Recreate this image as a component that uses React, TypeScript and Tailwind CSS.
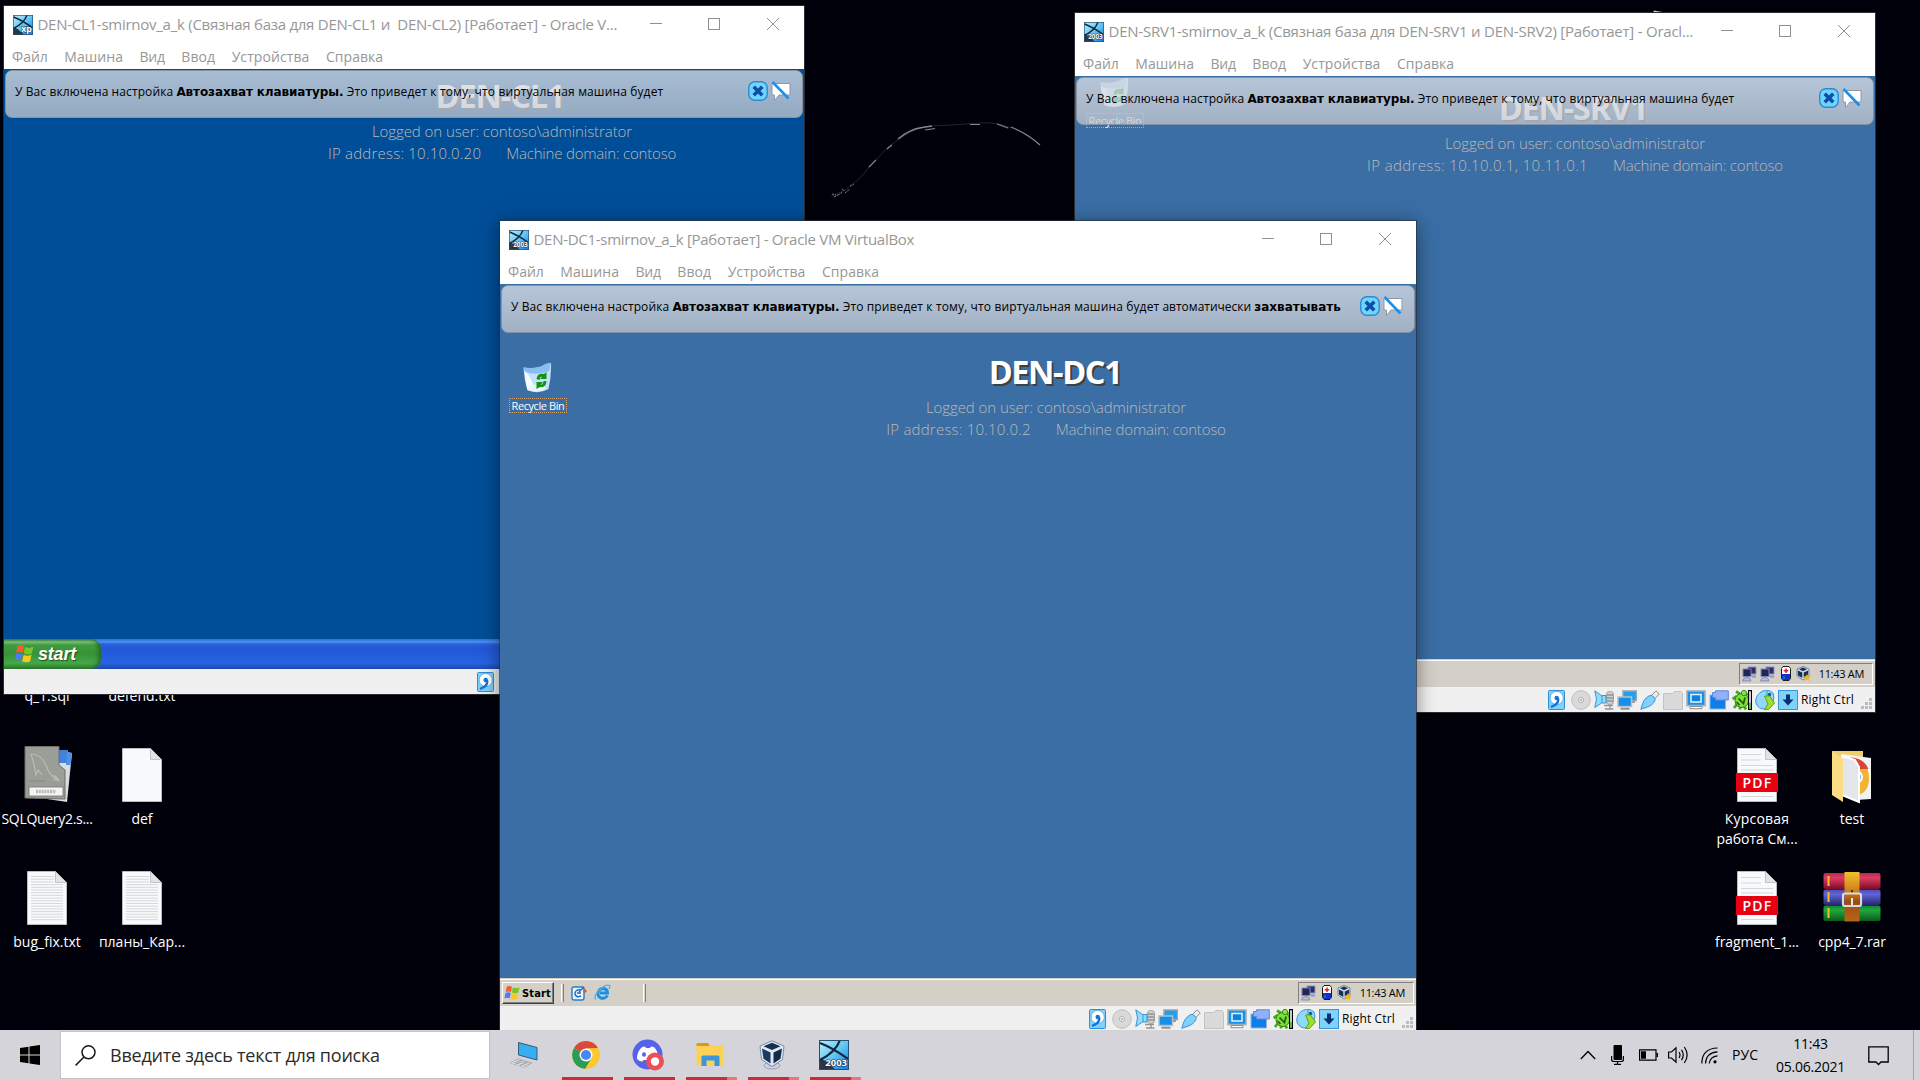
import React from "react";

type Kids = { children?: React.ReactNode };

/* ---------- Windows-style VM logo ---------- */
function OsLogo({ size, label, id }: { size: number; label: string; id: string }) {
  return (
    <svg width={size} height={size} viewBox="0 0 30 30" className="shrink-0">
      <defs>
        <linearGradient id={id} x1="0" y1="0" x2="1" y2="1">
          <stop offset="0" stopColor="#bdf0fb" />
          <stop offset=".5" stopColor="#62c6f2" />
          <stop offset="1" stopColor="#0a78e8" />
        </linearGradient>
      </defs>
      <rect width="30" height="30" fill={`url(#${id})`} />
      <path d="M0 18 L7 21 L17 30 H0Z" fill="#2b3546" />
      <path d="M1 3 Q14 8 29 19 M21 0 Q17 12 1 20" stroke="#14273f" strokeWidth="2.2" fill="none" />
      <rect x=".5" y=".5" width="29" height="29" fill="none" stroke="#27506f" />
      <text x="28" y="26" textAnchor="end" fontFamily="Open Sans" fontWeight="700" fontSize={label === "xp" ? 13 : 9.5} fill="#fff" stroke="#1b2a44" strokeWidth="1.2" paintOrder="stroke">{label}</text>
    </svg>
  );
}

/* ---------- Window chrome ---------- */
function Caption() {
  return (
    <div className="flex h-[36px] shrink-0 pr-px">
      <div className="flex w-[58px] items-center justify-center"><svg width="12" height="12" viewBox="0 0 12 12"><path d="M0 5.5H12" stroke="#8f8f8f" /></svg></div>
      <div className="flex w-[58px] items-center justify-center"><svg width="12" height="12" viewBox="0 0 12 12"><rect x=".5" y=".5" width="11" height="11" fill="none" stroke="#8f8f8f" /></svg></div>
      <div className="flex w-[60px] items-center justify-center"><svg width="12" height="12" viewBox="0 0 12 12"><path d="M0 0L12 12M12 0L0 12" stroke="#8f8f8f" /></svg></div>
    </div>
  );
}

function MenuBar() {
  return (
    <div className="flex h-[25px] items-center gap-[16.5px] pl-[8px] text-[14px] leading-none text-[#979797]">
      <span>Файл</span>
      <span className="tracking-[0.04px]">Машина</span>
      <span className="tracking-[-0.2px]">Вид</span>
      <span className="tracking-[0.05px]">Ввод</span>
      <span className="tracking-[0.09px]">Устройства</span>
      <span className="tracking-[0.04px]">Справка</span>
    </div>
  );
}

function Banner({ long }: { long?: boolean }) {
  return (
    <div className="absolute top-px right-px left-px flex h-[48px] rounded-[7px] border border-[#8393a4] bg-linear-to-b from-[rgba(221,225,231,0.76)] to-[rgba(194,198,206,0.76)] pr-[11px] pl-[9px]">
      <div className="flex-1 pt-[12px] text-[12px] leading-[18px] whitespace-pre text-black">
        <span className="tracking-[0.1px]">У Вас включена настройка </span>
        <span className="font-['DejaVu_Sans',sans-serif] font-bold tracking-[-0.12px]">Автозахват клавиатуры.</span>
        <span className="tracking-[0.13px]"> Это приведет к тому, что виртуальная машина будет</span>
        {long && <span> автоматически </span>}
        {long && <span className="font-['DejaVu_Sans',sans-serif] font-bold">захватывать</span>}
      </div>
      <div className="flex gap-[3px] pt-[10px]">
        <svg width="20" height="20" viewBox="0 0 20 20">
          <rect x=".8" y=".8" width="18.4" height="18.4" rx="6" fill="#71d4fb" stroke="#2a8bd4" strokeWidth="1.4" />
          <path d="M7 7l6 6M13 7l-6 6" stroke="#0b4fa8" strokeWidth="3.6" strokeLinecap="square" />
        </svg>
        <svg width="20" height="20" viewBox="0 0 20 20">
          <path d="M1 2.5H19V14H8L3.5 19.500V14H1Z" fill="#fff" stroke="#8d99a8" />
          <path d="M1.500 1L17.500 17.500" stroke="#1e8fe8" strokeWidth="2.600" />
        </svg>
      </div>
    </div>
  );
}

/* ---------- VirtualBox status bar icons ---------- */
function StatusBar() {
  return (
    <div className="flex h-[25px] shrink-0 items-center justify-end gap-[3px] bg-[#f0f0f0] pr-[2px] text-[12px] text-black">
      <svg width="20" height="20" viewBox="0 0 20 20">
        <rect x=".5" y=".5" width="16" height="19" rx="1" fill="#7fd0f8" stroke="#2f8ed8" />
        <circle cx="8.700" cy="8" r="6.600" fill="#fff" stroke="#4ea6e6" strokeWidth=".8" />
        <circle cx="8.700" cy="8" r="2.200" fill="#1573d6" />
        <path d="M10 8C11 13 8 15 3 17" stroke="#1573d6" strokeWidth="2.400" fill="none" />
      </svg>
      <svg width="20" height="20" viewBox="0 0 20 20">
        <circle cx="10" cy="10" r="9.300" fill="#d9d9d9" stroke="#bdbdbd" />
        <circle cx="10" cy="10" r="2.600" fill="#ededed" stroke="#b5b5b5" />
        <circle cx="10" cy="10" r=".9" fill="#a5a5a5" />
      </svg>
      <svg width="20" height="20" viewBox="0 0 20 20">
        <rect x="12.500" y="1.500" width="7" height="13" rx="3" fill="#cfcfcf" stroke="#9f9f9f" />
        <path d="M13 5h6M13 8h6M13 11h6M10 15.500h9M11 19h8.500M16 15v4" stroke="#949494" strokeWidth="1.300" />
        <path d="M.8 .8L7.500 5.500H12V13H7.500L.8 17.500L2.500 9Z" fill="#8fdcfb" stroke="#3b93d6" />
        <path d="M8 5.500V13" stroke="#3b93d6" />
      </svg>
      <svg width="20" height="20" viewBox="0 0 20 20">
        <rect x="6" y="1" width="13.500" height="9.500" fill="#1fa0f0" stroke="#9aa3ab" strokeWidth="1.500" />
        <path d="M14 12h4" stroke="#9a9a9a" strokeWidth="2" />
        <rect x="1" y="7" width="13.500" height="9.500" fill="#1590ea" stroke="#b9bec4" strokeWidth="1.500" />
        <path d="M3.500 18.700h9" stroke="#8f8f8f" strokeWidth="2" />
      </svg>
      <svg width="20" height="20" viewBox="0 0 20 20">
        <path d="M11.500 5.500L16 .8L19.300 4L15 8.500Z" fill="#ececec" stroke="#8d8d8d" />
        <path d="M.8 19.300L3 12.500C5 8 10 4.500 12 5.500L15 8.500C16 11 12 15.500 7.500 17Z" fill="#7fd0fb" stroke="#3a93d8" />
      </svg>
      <svg width="20" height="20" viewBox="0 0 20 20">
        <path d="M.5 19.500V3.500H9.500L12 1.500H18L19.500 3.500V19.500Z" fill="#dadada" stroke="#c2c2c2" />
      </svg>
      <svg width="20" height="20" viewBox="0 0 20 20">
        <rect x="1" y="1" width="18" height="14.500" fill="#1a8fe8" stroke="#a3b0ba" strokeWidth="1.600" />
        <rect x="5" y="4.500" width="10" height="7.500" fill="#0f82e0" stroke="#d4f1ff" strokeWidth="1.600" />
        <path d="M4 16.500H16V18.700H4Z" fill="#fff" stroke="#8d8d8d" />
      </svg>
      <svg width="20" height="20" viewBox="0 0 20 20">
        <rect x="1" y="5" width="15.500" height="14" fill="#0f7fe8" stroke="#8bb6da" />
        <path d="M3.500 2.500H6.500V.8H19.300V10H6.500V7.500H3.500Z" fill="#8fb0fb" stroke="#6286d8" />
      </svg>
      <svg width="20" height="20" viewBox="0 0 20 20">
        <path d="M4 1.500L8 4M.5 9L5 6M2 18L5 14M8 19.500L8 16M14 19.500L12 16M16 4L13 5" stroke="#4aa81e" strokeWidth="2.800" />
        <ellipse cx="9.800" cy="10.500" rx="6.800" ry="7" fill="#7be03c" stroke="#2f7d12" />
        <circle cx="12" cy="3" r="2.600" fill="#8be84a" stroke="#3a8a18" />
        <path d="M6.500 8.500L11.500 13.500L13 7.500M4.500 12L7.500 15" stroke="#1f5d0a" strokeWidth="1.700" fill="none" />
        <rect x="16.600" y=".6" width="2.800" height="18.800" fill="#fff" stroke="#000" strokeWidth="1.200" />
        <path d="M18 13v6" stroke="#30c020" strokeWidth="1.600" />
      </svg>
      <svg width="20" height="20" viewBox="0 0 20 20">
        <path d="M8 1C3 3 0 8 1 13C3 19 9 20 13 18C18 15 20 8 18 3C15 0 11 0 8 1Z" fill="#8fdafa" stroke="#3c92cf" />
        <path d="M12 1V7" stroke="#3c92cf" />
        <circle cx="14.500" cy="4.500" r="1.700" fill="#10569c" />
        <path d="M9.500 6H14.500L19.500 13L13.500 19.500H9.500L13 14Z" fill="#9ae02c" stroke="#5da314" />
      </svg>
      <svg width="20" height="20" viewBox="0 0 20 20">
        <rect x=".5" y=".5" width="19" height="19" fill="#7fd3fb" stroke="#3a95d8" />
        <path d="M8 4.500H12V9.500H15.500L10 15.500L4.500 9.500H8Z" fill="#062f74" />
      </svg>
      <span className="w-[53px] tracking-[0.15px] whitespace-nowrap">Right Ctrl</span>
      <svg width="16" height="20" viewBox="0 0 16 20" fill="#bcbcbc">
        <path d="M12 8h3v3h-3zM8 12h3v3H8zM12 12h3v3h-3zM4 16h3v3H4zM8 16h3v3H8zM12 16h3v3h-3z" />
      </svg>
    </div>
  );
}

/* ---------- Guest desktop parts ---------- */
function Info({ name, ip, ipCls, pos, nameCls }: { name: string; ip: string; ipCls: string; pos: string; nameCls: string }) {
  return (
    <div className={"absolute flex w-[480px] flex-col items-center text-[15px] leading-[22px] font-light whitespace-pre text-[#bcb9b4] " + pos}>
      <div className={"relative top-px mb-[5px] text-[32.5px] leading-[40px] font-bold text-white [text-shadow:2px_2px_0_#404040] " + nameCls}>{name}</div>
      <div className="tracking-[-0.07px]">{"Logged on user: contoso\\administrator"}</div>
      <div className="flex gap-[25px]">
        <span className={ipCls}>{ip}</span>
        <span className="tracking-[-0.19px]">Machine domain: contoso</span>
      </div>
    </div>
  );
}

function RecycleBin({ pos }: { pos: string }) {
  return (
    <div className={"absolute flex w-[58px] flex-col items-center " + pos}>
      <svg width="32" height="32" viewBox="0 0 32 32" className="mr-[3px]">
        <path d="M2.500 5.500Q16 8 30 .8Q30.500 14 27.500 27Q17 33 6.500 28Q3.500 20 2.500 5.500Z" fill="#c3e2fa" />
        <path d="M2.500 5.500Q18 7 23 2.500Q27 .5 30 .8L28 9Q16 14 4 10Z" fill="#8cbdf0" />
        <path d="M3.500 9Q11 14 13 28Q9 29.500 6.500 28Q4.500 20 3.500 9Z" fill="#f2faff" />
        <ellipse cx="16" cy="26" rx="8.500" ry="3.500" fill="#e9f6ff" />
        <path d="M15.500 17Q16.500 10.500 23 12L25.500 10V17H19L21 15Q19 14 18.500 18ZM25.500 19Q25 26 19 25L15.500 27V20H22L19.500 23Q22 23 22.500 19Z" fill="#119411" />
      </svg>
      <div className="mt-[4px] flex h-[15px] w-full items-center justify-center border border-dotted border-[#d9a066] text-[11px] leading-none tracking-[-0.41px] whitespace-nowrap text-white">Recycle Bin</div>
    </div>
  );
}

function Flag({ size }: { size: number }) {
  return (
    <svg width={size} height={size} viewBox="0 0 18 18" className="shrink-0">
      <path d="M3 2Q6 0 9 2L7.800 8Q5 6.500 2 8Z" fill="#f0602c" />
      <path d="M10 2.500Q13 4.500 17.500 2.500L16 8.500Q13 10.500 8.800 8.500Z" fill="#7cc623" />
      <path d="M1.800 9Q5 7.500 7.600 9L6.400 15Q3.500 13.500 .5 15Z" fill="#4a7df0" />
      <path d="M8.600 9.600Q12 11.500 15.800 9.600L14.500 15.500Q11 17.500 7.300 15.500Z" fill="#f8c820" />
    </svg>
  );
}

function NetIcon() {
  return (
    <svg width="15" height="16" viewBox="0 0 15 16">
      <rect x="6" y="1" width="8" height="7" fill="#2c2f66" stroke="#8e92c8" />
      <rect x="1" y="3" width="8" height="7.500" fill="#23264f" stroke="#7f83bc" />
      <path d="M.5 15Q1 11.500 5 11.500Q9 11.500 9 15Z" fill="#b9bcd8" stroke="#8589b8" />
      <path d="M10 10.500h4" stroke="#9a9cc0" strokeWidth="2.500" />
    </svg>
  );
}

function CubeIcon({ size }: { size: number }) {
  return (
    <svg width={size} height={size} viewBox="0 0 28 30">
      <ellipse cx="14" cy="25.500" rx="8" ry="3.500" fill="none" stroke="#8f9fbe" />
      <ellipse cx="14" cy="24.500" rx="5" ry="2.500" fill="#b5c0d6" />
      <path d="M14 .8L26 6L24.500 19.500L14 26.500L3.500 19.500L2 6Z" fill="#dfe7f2" stroke="#7d8da8" />
      <path d="M14 2.800L22.500 6.300L14 10L5.500 6.300Z" fill="#16304f" />
      <path d="M4 8.500L12.500 12.500V23.500L5.500 18.800Z" fill="#1b3a63" />
      <path d="M24 8.500L15.500 12.500V23.500L22.500 18.800Z" fill="#12294a" />
    </svg>
  );
}

function ClassicTray({ nets }: { nets: number }) {
  return (
    <div className="flex h-[22px] items-center border border-t-[#808080] border-r-white border-b-white border-l-[#808080] pr-[8px] pl-[2px]">
      <div className="flex gap-[3px]">{Array.from({ length: nets }, (_, i) => <NetIcon key={i} />)}</div>
      <svg width="10" height="15" viewBox="0 0 10 15" className="ml-[6px]">
        <path d="M2 .5H8L9.500 2.500V12.500L8 14.500H2L.5 12.500V2.500Z" fill="#fff" stroke="#1c1c1c" />
        <path d="M1 8H9V12.500L8 14H2L1 12.500Z" fill="#1130d8" />
        <path d="M5 2.500V7M2.800 4.700H7.200" stroke="#e02020" strokeWidth="1.500" />
        <path d="M3 10v3" stroke="#21b040" />
      </svg>
      <svg width="15" height="15" viewBox="0 0 15 15" className="ml-[5px]">
        <path d="M7 .5L13 3V10L7 14L1 10V3Z" fill="#d5deea" stroke="#7085a5" />
        <path d="M7 1.500L11 3.300L7 5.200L3 3.300Z" fill="#16304f" />
        <path d="M1.800 4.500L6.300 6.600V12L2 9.500ZM12.200 4.500L7.700 6.600V12L12 9.500Z" fill="#16304f" />
        <path d="M11 8l1.200 2.300 2.600.3-1.900 1.800.5 2.600-2.400-1.300-2.400 1.300.5-2.600-1.900-1.800 2.600-.3z" fill="#f7b21a" />
      </svg>
      <span className="ml-[8px] text-[11px] leading-none tracking-[-0.3px] whitespace-nowrap text-black">11:43 AM</span>
    </div>
  );
}

function Grip() {
  return <div className="h-[18px] w-[3px] border-r border-l border-r-[#808080] border-l-white bg-[#d4d0c8]" />;
}

function ClassicTaskbar({ nets }: { nets: number }) {
  return (
    <div className="flex h-[28px] shrink-0 items-center border-t border-[#d4d0c8] bg-[#d4d0c8] pr-[2px] pl-[2px] shadow-[inset_0_1px_0_#fff]">
      <div className="flex h-[22px] w-[52px] items-center border border-t-white border-r-[#404040] border-b-[#404040] border-l-white pl-[1px] shadow-[inset_-1px_-1px_0_#808080]">
        <Flag size={16} />
        <span className="mt-px ml-[2px] font-['DejaVu_Sans_Condensed',sans-serif] text-[11px] leading-none font-bold tracking-[0.15px] text-black">Start</span>
      </div>
      <div className="ml-[7px]"><Grip /></div>
      <svg width="17" height="16" viewBox="0 0 17 16" className="ml-[7px]">
        <rect x="1" y="2" width="12" height="13" rx="2" fill="#e9f4ff" stroke="#2c7bc8" strokeWidth="1.400" />
        <path d="M10 5Q4 4 4 9Q5 13 10 11M6 8H10M8 7L13 2" stroke="#2370c0" strokeWidth="1.500" fill="none" />
        <circle cx="14" cy="6" r="1.700" fill="#e05a1a" />
      </svg>
      <svg width="17" height="17" viewBox="0 0 17 17" className="ml-[6px]">
        <path d="M13.500 11.500Q11 15 7.500 14.200Q3.500 13 4 9Q5 4.500 9 4.500Q13.500 5 13.500 9H6" stroke="#1f8fe0" strokeWidth="3" fill="none" />
        <path d="M2 15.500Q-1 13 5 6.500Q12 0 15.500 1.500Q16.500 2.500 15 5" stroke="#49b0ee" strokeWidth="1.300" fill="none" />
      </svg>
      <div className="ml-[32px]"><Grip /></div>
      <div className="flex-1" />
      <ClassicTray nets={nets} />
    </div>
  );
}

function LunaTaskbar() {
  return (
    <div className="flex h-[30px] shrink-0 bg-[linear-gradient(180deg,#2f6fd8_0px,#4a93f0_3px,#2a62dc_5px,#2257d6_9px,#2663e2_24px,#1d49b0_30px)]">
      <div className="flex h-full w-[97px] items-center rounded-r-[10px] bg-[linear-gradient(180deg,#2f7d33_0px,#7cc07c_3px,#3f9a40_6px,#379238_15px,#46a846_24px,#2b7a2c_30px)] pl-[10px] shadow-[inset_-4px_0_5px_-2px_#1d5f20]">
        <Flag size={20} />
        <span className="ml-[4px] font-['Liberation_Sans',sans-serif] text-[18px] leading-none font-bold tracking-[-0.2px] text-white italic [text-shadow:1px_1px_1px_#1d4d1d]">start</span>
      </div>
    </div>
  );
}

function VmWindow({ pos, title, titleCls, label, bg, long, children, bar }: { pos: string; title: string; titleCls: string; label: string; bg: string; long?: boolean; bar: React.ReactNode } & Kids) {
  return (
    <section className={"absolute flex flex-col overflow-hidden bg-white " + pos}>
      <header className="flex h-[38px] shrink-0">
        <div className="flex h-[37px] min-w-0 flex-1 items-center pl-[9px]">
          <OsLogo size={20} label={label} id={"logo" + title.slice(4, 8)} />
          <h1 className={"-mt-px ml-[4.5px] text-[15px] leading-none whitespace-pre text-[#979797] " + titleCls}>{title}</h1>
        </div>
        <Caption />
      </header>
      <MenuBar />
      <div className={"relative flex-1 overflow-hidden " + bg}>
        {children}
        <Banner long={long} />
      </div>
      {bar}
      <StatusBar />
    </section>
  );
}

/* ---------- Host desktop icons ---------- */
function Desk({ pos, label, children }: { pos: string; label: React.ReactNode } & Kids) {
  return (
    <div className={"absolute flex w-[96px] flex-col items-center text-center text-[14px] leading-[20px] whitespace-nowrap text-white " + pos}>
      <div className="mb-[4px] h-[60px] w-[60px]">{children}</div>
      {label}
    </div>
  );
}

function Page({ kind }: { kind: "blank" | "text" | "pdf" }) {
  return (
    <svg width="60" height="60" viewBox="0 0 60 60">
      <path d="M10.500 3.500H38.500L49.500 14.500V56.500H10.500Z" fill="#f8f9fb" stroke="#b9bcc0" />
      <path d="M38.500 3.500V14.500H49.500Z" fill="#e2e3e6" stroke="#b5b7ba" strokeWidth=".8" />
      {kind === "text" && Array.from({ length: 17 }, (_, i) => (
        <path key={i} d={`M14 ${8.500 + i * 2.700}H${i < 3 ? 37 : 46}`} stroke="#d5d7da" strokeWidth="1" />
      ))}
      {kind === "pdf" && (
        <g>
          <path d="M14 9.500H34M14 15H34M14 20.500H46M14 25H46M14 51.500H46" stroke="#d5d7da" />
          <rect x="9" y="28" width="42" height="19" fill="#e60012" />
          <text x="30.500" y="42.500" textAnchor="middle" fontFamily="Open Sans" fontWeight="600" fontSize="14" letterSpacing="1.200" fill="#fff">PDF</text>
        </g>
      )}
    </svg>
  );
}

function SqlFile() {
  return (
    <svg width="60" height="60" viewBox="0 0 60 60">
      <path d="M40 5L55 8L50 57L30 54Z" fill="#d9dde0" />
      <path d="M42 5H51V18H42Z" fill="#3f83dd" /><path d="M50 7L55 8L53.500 20H49Z" fill="#4f8fe4" />
      <path d="M8 1.500H42V20L48 25V54L8 53Z" fill="#9b9d97" stroke="#6d6f6a" />
      <path d="M14 9Q24 9 29 20Q32 31 42 35L37 30M42 36L36 34M14 9Q17 18 19 30L21 25L25 30" stroke="#bbbdb8" strokeWidth="1.100" fill="none" />
      <path d="M13 36H28" stroke="#85877f" />
      <rect x="12" y="42" width="34" height="9" fill="#f4f4f2" stroke="#777" strokeWidth=".8" />
      <path d="M19 46.500H39" stroke="#bbb" strokeWidth="3.500" strokeDasharray="2 .8" />
    </svg>
  );
}

function FolderTest() {
  return (
    <svg width="60" height="60" viewBox="0 0 60 60">
      <path d="M10 6H41V16H12Z" fill="#f3cf6b" />
      <path d="M20 9L49 13V54L34 55L20 50Z" fill="#f1f2f3" />
      <path d="M26 13Q47 14 47 33Q47 48 34 51Z" fill="#f2b233" />
      <path d="M28 12.500Q42 13 46.500 24H32Z" fill="#d8443c" />
      <circle cx="34" cy="32" r="6" fill="#7fb8ea" stroke="#fff" strokeWidth="2" />
      <path d="M20 11L33 15L37 22V57L20 50Z" fill="#e3e7ea" stroke="#fff" strokeWidth="2" />
      <path d="M10 6L21 14V57L10 50Z" fill="#fbdc84" />
    </svg>
  );
}

function RarFile() {
  return (
    <svg width="60" height="60" viewBox="0 0 60 60">
      <defs>
        <linearGradient id="rr" x1="0" x2="0" y1="0" y2="1"><stop offset="0" stopColor="#b8284c" /><stop offset=".3" stopColor="#dc3c62" /><stop offset="1" stopColor="#7d0d28" /></linearGradient>
        <linearGradient id="rb" x1="0" x2="0" y1="0" y2="1"><stop offset="0" stopColor="#4a4cb4" /><stop offset=".3" stopColor="#6264d8" /><stop offset="1" stopColor="#26286f" /></linearGradient>
        <linearGradient id="rg" x1="0" x2="0" y1="0" y2="1"><stop offset="0" stopColor="#12852c" /><stop offset=".3" stopColor="#1fa83c" /><stop offset="1" stopColor="#0c5a1c" /></linearGradient>
        <linearGradient id="rs" x1="0" x2="0" y1="0" y2="1"><stop offset="0" stopColor="#f3c02a" /><stop offset=".45" stopColor="#c4741a" /><stop offset=".6" stopColor="#9c4c10" /><stop offset="1" stopColor="#b8651a" /></linearGradient>
      </defs>
      <rect x="1.500" y="5" width="57" height="16" rx="2" fill="url(#rr)" />
      <rect x="1.500" y="21.500" width="57" height="15.500" rx="2" fill="url(#rb)" />
      <rect x="1.500" y="37.500" width="57" height="15.500" rx="2" fill="url(#rg)" />
      <path d="M6.500 8V18M6.500 24V34M6.500 40V50" stroke="#f1bf2c" strokeWidth="2" />
      <rect x="22.500" y="4" width="15" height="49.500" fill="url(#rs)" />
      <path d="M30 22v2.500" stroke="#5a2c06" strokeWidth="2" />
      <rect x="21" y="25.500" width="18" height="12.500" rx="2" fill="none" stroke="#d8dade" strokeWidth="2.200" />
      <path d="M30 30V37" stroke="#e8e8e8" strokeWidth="2" />
    </svg>
  );
}

/* ---------- Host taskbar ---------- */
function TaskIcon({ split, plain, children }: { split?: boolean; plain?: boolean } & Kids) {
  return (
    <div className="flex h-full w-[62px] flex-col items-center">
      <div className="flex flex-1 items-center justify-center pt-[3px] pr-[2px]">{children}</div>
      <div className="flex h-[3px] w-[51px]">
        {!plain && <div className="flex-1 bg-[#cf2b33]" />}
        {split && <div className="w-[10px] bg-[#e2797e]" />}
      </div>
    </div>
  );
}

function Taskbar() {
  return (
    <footer className="absolute inset-x-0 bottom-0 flex h-[50px] bg-[#d5d4da] text-black">
      <div className="flex w-[60px] items-center justify-center">
        <svg width="20" height="20" viewBox="0 0 20 20"><path d="M0 3L8.500 1.800V9.500H0ZM9.500 1.600L20 0V9.500H9.500ZM0 10.500H8.500V18.200L0 17ZM9.500 10.500H20V20L9.500 18.400Z" /></svg>
      </div>
      <div className="my-px flex w-[430px] items-center border border-[#c4c4c8] bg-white pl-[14px]">
        <svg width="21" height="21" viewBox="0 0 21 21" fill="none" stroke="#1a1a1a" strokeWidth="1.500"><circle cx="13.500" cy="7.300" r="6.500" /><path d="M9 12L.6 20.400" /></svg>
        <span className="ml-[14px] text-[18px] leading-none tracking-[-0.22px] text-[#2b2b2b]">Введите здесь текст для поиска</span>
      </div>
      <div className="flex pl-[4px]">
        <TaskIcon plain>
          <svg width="28" height="28" viewBox="0 0 28 28">
            <path d="M8.500 1.500L27 6.500V19L8.500 14Z" fill="#38aef2" stroke="#3a5a70" />
            <path d="M0 22L8 17.500L22 22L15 26.500Z" fill="#e4e6ea" stroke="#9da3a9" strokeWidth=".6" />
            <path d="M3 21L17 25M5 19.700L19 23.600M7 18.500L21 22.500M5 23.500L12 19M10 25L17 20.500" stroke="#8d9499" strokeWidth=".7" />
          </svg>
        </TaskIcon>
        <TaskIcon>
          <svg width="28" height="28" viewBox="0 0 28 28">
            <circle cx="14" cy="14" r="13.800" fill="#fdc72e" />
            <path d="M14 14L2 7.100A13.800 13.800 0 0 1 26 7.100L14 7.500Z" fill="#d94a3d" />
            <path d="M2 7.100A13.800 13.800 0 0 0 13.300 27.800L19.600 17L14 14Z" fill="#2a9c56" />
            <path d="M14 7.500H26A13.800 13.800 0 0 1 13.300 27.800L19.800 17Z" fill="#fdc72e" />
            <circle cx="14" cy="14" r="6.500" fill="#fff" /><circle cx="14" cy="14" r="5.100" fill="#4688f1" />
          </svg>
        </TaskIcon>
        <TaskIcon>
          <svg width="32" height="32" viewBox="0 0 32 32">
            <circle cx="15.500" cy="15.500" r="15" fill="#5562ea" />
            <path d="M9.500 8.500Q11 7.500 13 7.500L14 9H18L19 7.500Q21 7.500 22.500 8.500Q27 14 26.500 20Q24 22.500 21 22.500L20 21H11.500L10.500 22.500Q7.500 22.500 5 20Q5 13 9.500 8.500Z" fill="#fff" />
            <ellipse cx="12" cy="15.500" rx="2" ry="2.200" fill="#5562ea" />
            <circle cx="23" cy="22.500" r="9" fill="#ec4f55" /><circle cx="23" cy="22.500" r="4.200" fill="#fff" />
          </svg>
        </TaskIcon>
        <TaskIcon split>
          <svg width="28" height="28" viewBox="0 0 28 28">
            <path d="M.5 3Q.5 2 1.500 2H12L14 5H.5Z" fill="#d99a12" />
            <path d="M.5 5H13L14.500 4H26.500Q27.500 4 27.500 5V24Q27.500 25 26.500 25H.5Z" fill="#fdd155" />
            <path d="M5.500 25V16Q5.500 14.500 7 14.500H22Q23.500 14.500 23.500 16V25H18.500V19.500H10.500V25Z" fill="#3a95dc" />
          </svg>
        </TaskIcon>
        <TaskIcon split><CubeIcon size={30} /></TaskIcon>
        <TaskIcon split><OsLogo size={30} label="2003" id="logoTask" /></TaskIcon>
      </div>
      <div className="flex-1" />
      <div className="flex items-center pr-[6px]">
        <svg width="16" height="10" viewBox="0 0 16 10" className="shrink-0"><path d="M.8 9L8 1.500L15.200 9" stroke="#000" strokeWidth="1.300" fill="none" /></svg>
        <svg width="13" height="20" viewBox="0 0 13 20" className="ml-[15px] shrink-0"><rect x="2.500" width="8.500" height="15" rx="1" /><path d="M.6 11V14.500Q.6 16.500 3 16.500H10Q12.400 16.500 12.400 14.500V11M6.500 16.500V19M3 19.300H10" stroke="#000" strokeWidth="1.200" fill="none" /></svg>
        <svg width="19" height="12" viewBox="0 0 19 12" className="ml-[15px] shrink-0"><path d="M.6 .8H17V11.200H.6Z" stroke="#000" strokeWidth="1.200" fill="none" /><path d="M2 2.300H7V9.700H2ZM17.500 4H19V8H17.500Z" /></svg>
        <svg width="21" height="18" viewBox="0 0 21 18" className="ml-[10px] shrink-0" fill="none" stroke="#000" strokeWidth="1.200"><path d="M.6 6H3.500L8 1.800V16.200L3.500 12H.6ZM11 6Q13 9 11 12M13.500 3.800Q17 9 13.500 14.200M16.300 1Q22 9 16.300 17" /></svg>
        <svg width="17" height="17" viewBox="0 0 17 17" className="ml-[12px] shrink-0" fill="none" stroke="#000" strokeWidth="1.200"><path d="M.8 16.500Q1 1.500 16.500 1M4.500 16.500Q5 5.500 16.500 4.800M8.300 16.500Q9 9.500 16.500 8.800" /><circle cx="14" cy="14.800" r="1.600" fill="#000" stroke="none" /></svg>
        <span className="ml-[14px] text-[14px] leading-none">РУС</span>
        <div className="ml-[18px] flex flex-col items-center text-[14px] leading-[23px] tracking-[-0.24px]"><span>11:43</span><span>05.06.2021</span></div>
        <svg width="21" height="20" viewBox="0 0 21 20" className="mt-[2px] ml-[23px] shrink-0" fill="none" stroke="#000" strokeWidth="1.300"><path d="M.8 .8H20.200V16H13L10.500 18.500L8 16H.8Z" /></svg>
        <div className="ml-[24px] h-[50px] w-px bg-[#a5a4ab]" />
      </div>
    </footer>
  );
}

export default function App() {
  return (
    <main className="relative h-[1080px] w-[1920px] overflow-hidden bg-[#00000a] font-['Open_Sans',sans-serif]">
      <svg className="absolute top-[110px] left-[820px]" width="240" height="95" viewBox="820 110 240 95" fill="none" stroke="#85858d">
        <path d="M831 197L838 193L846 190L854 183L862 176L869 167L876 160L888 147L901 138Q915 128 930 126L951 125L981 123Q1000 121 1023 133L1040 145" stroke="#2c2c34" strokeWidth=".8" />
        <path d="M898 139Q910 129 922 127.500L932 126" strokeWidth="1.400" />
        <path d="M869 167L876 160M887 149L892 145M925 130L935 128.500M970 124.500H980M997 124L1008 128M1011 127Q1028 134 1040 145" strokeWidth="1.200" />
        <path d="M832 194l4 1M838 195l5-3M842 189l3 2M845 193l5-4M850 186l4-2M834 197l4-2" strokeWidth="1" strokeDasharray="2 1" />
      </svg>
      <svg className="absolute top-[9px] left-[1650px]" width="24" height="4" viewBox="0 0 24 4"><path d="M3 4L4 1.500L9 2.500L20 4Z" fill="#d0d0d4" /></svg>

      <Desk pos="left-[-1px] top-[622px]" label={<span>q_1.sql</span>}><Page kind="text" /></Desk>
      <Desk pos="left-[94px] top-[622px]" label={<span>defend.txt</span>}><Page kind="text" /></Desk>
      <Desk pos="left-[-1px] top-[745px]" label={<span className="tracking-[-0.31px]">SQLQuery2.s...</span>}><SqlFile /></Desk>
      <Desk pos="left-[94px] top-[745px]" label={<span>def</span>}><Page kind="blank" /></Desk>
      <Desk pos="left-[-1px] top-[868px]" label={<span>bug_fix.txt</span>}><Page kind="text" /></Desk>
      <Desk pos="left-[94px] top-[868px]" label={<span>планы_Кар...</span>}><Page kind="text" /></Desk>
      <Desk pos="left-[1709px] top-[745px]" label={<span><span className="tracking-[0.2px]">Курсовая</span><br />работа См...</span>}><Page kind="pdf" /></Desk>
      <Desk pos="left-[1804px] top-[745px]" label={<span>test</span>}><FolderTest /></Desk>
      <Desk pos="left-[1709px] top-[868px]" label={<span className="tracking-[-0.12px]">fragment_1...</span>}><Page kind="pdf" /></Desk>
      <Desk pos="left-[1804px] top-[868px]" label={<span className="tracking-[-0.14px]">cpp4_7.rar</span>}><RarFile /></Desk>

      <VmWindow
        pos="left-[4px] top-[6px] w-[800px] h-[688px] shadow-[0_0_0_1px_#2c2c33]"
        title="DEN-CL1-smirnov_a_k (Связная база для DEN-CL1 и  DEN-CL2) [Работает] - Oracle V..."
        titleCls="tracking-[-0.26px]" label="xp" bg="bg-[#004e98]" bar={<LunaTaskbar />}
      >
        <Info pos="left-[258px] top-[6px]" name="DEN-CL1" nameCls="right-[2px] tracking-[-1.1px]" ip="IP address: 10.10.0.20" ipCls="tracking-[0.22px]" />
      </VmWindow>

      <VmWindow
        pos="left-[1075px] top-[13px] w-[800px] h-[699px] shadow-[0_0_0_1px_#2c2c33]"
        title="DEN-SRV1-smirnov_a_k (Связная база для DEN-SRV1 и DEN-SRV2) [Работает] - Oracl..."
        titleCls="tracking-[-0.23px]" label="2003" bg="bg-[#3a6ea5]" bar={<ClassicTaskbar nets={2} />}
      >
        <Info pos="left-[260px] top-[11px]" name="DEN-SRV1" nameCls="right-[2px] tracking-[-1.2px]" ip="IP address: 10.10.0.1, 10.11.0.1" ipCls="tracking-[0.37px]" />
        <RecycleBin pos="left-[11px] top-px" />
      </VmWindow>

      <VmWindow
        pos="left-[500px] top-[221px] w-[916px] h-[810px] shadow-[0_0_0_1px_rgba(40,50,70,0.7),0_3px_18px_rgba(0,0,0,0.5)]"
        title="DEN-DC1-smirnov_a_k [Работает] - Oracle VM VirtualBox"
        titleCls="tracking-[-0.28px]" label="2003" bg="bg-[#3a6ea5]" long bar={<ClassicTaskbar nets={1} />}
      >
        <Info pos="left-[316px] top-[67px]" name="DEN-DC1" nameCls="right-px tracking-[-1.4px]" ip="IP address: 10.10.0.2" ipCls="tracking-[0.22px]" />
        <RecycleBin pos="left-[9px] top-[78px]" />
      </VmWindow>

      <Taskbar />
    </main>
  );
}
